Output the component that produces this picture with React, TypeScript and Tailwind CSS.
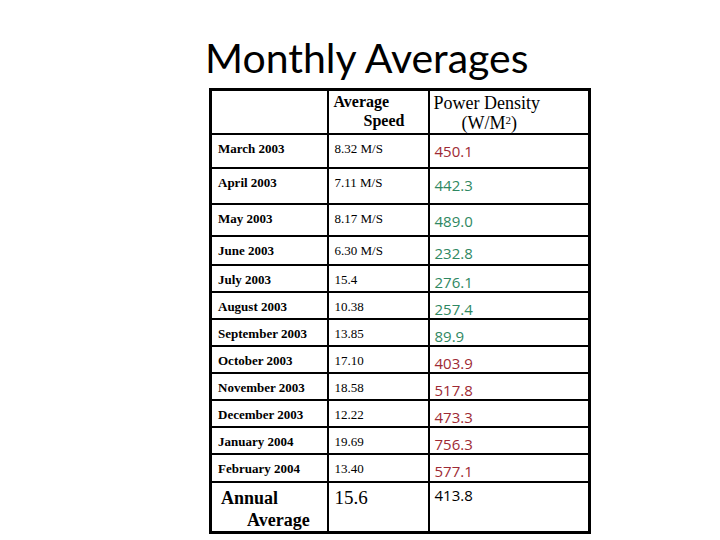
const rows: { month: string; speed: string; power: string; good: boolean; h: string }[] = [
  { month: "March 2003", speed: "8.32 M/S", power: "450.1", good: false, h: "h-[34px]" },
  { month: "April 2003", speed: "7.11 M/S", power: "442.3", good: true, h: "h-[36px]" },
  { month: "May 2003", speed: "8.17 M/S", power: "489.0", good: true, h: "h-[32px]" },
  { month: "June 2003", speed: "6.30 M/S", power: "232.8", good: true, h: "h-[29px]" },
  { month: "July 2003", speed: "15.4", power: "276.1", good: true, h: "h-[27px]" },
  { month: "August 2003", speed: "10.38", power: "257.4", good: true, h: "h-[27px]" },
  { month: "September 2003", speed: "13.85", power: "89.9", good: true, h: "h-[27px]" },
  { month: "October 2003", speed: "17.10", power: "403.9", good: false, h: "h-[27px]" },
  { month: "November 2003", speed: "18.58", power: "517.8", good: false, h: "h-[26px]" },
  { month: "December 2003", speed: "12.22", power: "473.3", good: false, h: "h-[27px]" },
  { month: "January 2004", speed: "19.69", power: "756.3", good: false, h: "h-[27px]" },
  { month: "February 2004", speed: "13.40", power: "577.1", good: false, h: "h-[28px]" },
];

export default function App() {
  return (
    <div className="w-[720px] h-[540px] bg-white overflow-hidden">
      <h1 className="pt-[33px] pl-[205px] text-[41px] leading-[50px] text-black font-['Lato',sans-serif]">
        Monthly Averages
      </h1>
      <table className="ml-[209px] mt-[5px] border-collapse border-[3px] border-black font-['Liberation_Serif',serif] text-black">
        <thead>
          <tr className="h-[42px] align-top">
            <th className="w-[117px] border-2 border-black p-0"></th>
            <th className="w-[101px] border-2 border-black p-0 text-left font-bold text-[16px] leading-[19px] pl-[5px] pt-[1px]">
              <div>Average</div>
              <div className="pl-[30px]">Speed</div>
            </th>
            <th className="w-[161px] border-2 border-black p-0 text-left font-normal text-[18px] leading-[20px] pl-[4px] pt-[2px]">
              <div>Power Density</div>
              <div className="pl-[28px]">
                (W/M<sup className="text-[11px]">2</sup>)
              </div>
            </th>
          </tr>
        </thead>
        <tbody>
          {rows.map((r) => (
            <tr key={r.month} className={`${r.h} align-top`}>
              <td className="border-2 border-black p-0 pl-[6px] pt-[6px] text-[13px] leading-[16px] font-bold">
                {r.month}
              </td>
              <td className="border-2 border-black p-0 pl-[6px] pt-[6px] text-[13px] leading-[16px]">
                {r.speed}
              </td>
              <td
                className={`border-2 border-black p-0 pl-[5px] pt-[7px] text-[15px] leading-[18px] font-normal font-['Open_Sans',sans-serif] ${
                  r.good ? "text-[#2f8862]" : "text-[#9e2a34]"
                }`}
              >
                {r.power}
              </td>
            </tr>
          ))}
          <tr className="h-[48px] align-top">
            <td className="border-2 border-black p-0 pl-[9px] pt-[4px] text-[18px] leading-[22px] font-bold">
              <div>Annual</div>
              <div className="pl-[26px]">Average</div>
            </td>
            <td className="border-2 border-black p-0 pl-[6px] pt-[4px] text-[19px] leading-[22px]">15.6</td>
            <td className="border-2 border-black p-0 pl-[5px] pt-[3px] text-[15px] leading-[18px] font-normal font-['Open_Sans',sans-serif]">
              413.8
            </td>
          </tr>
        </tbody>
      </table>
    </div>
  );
}
